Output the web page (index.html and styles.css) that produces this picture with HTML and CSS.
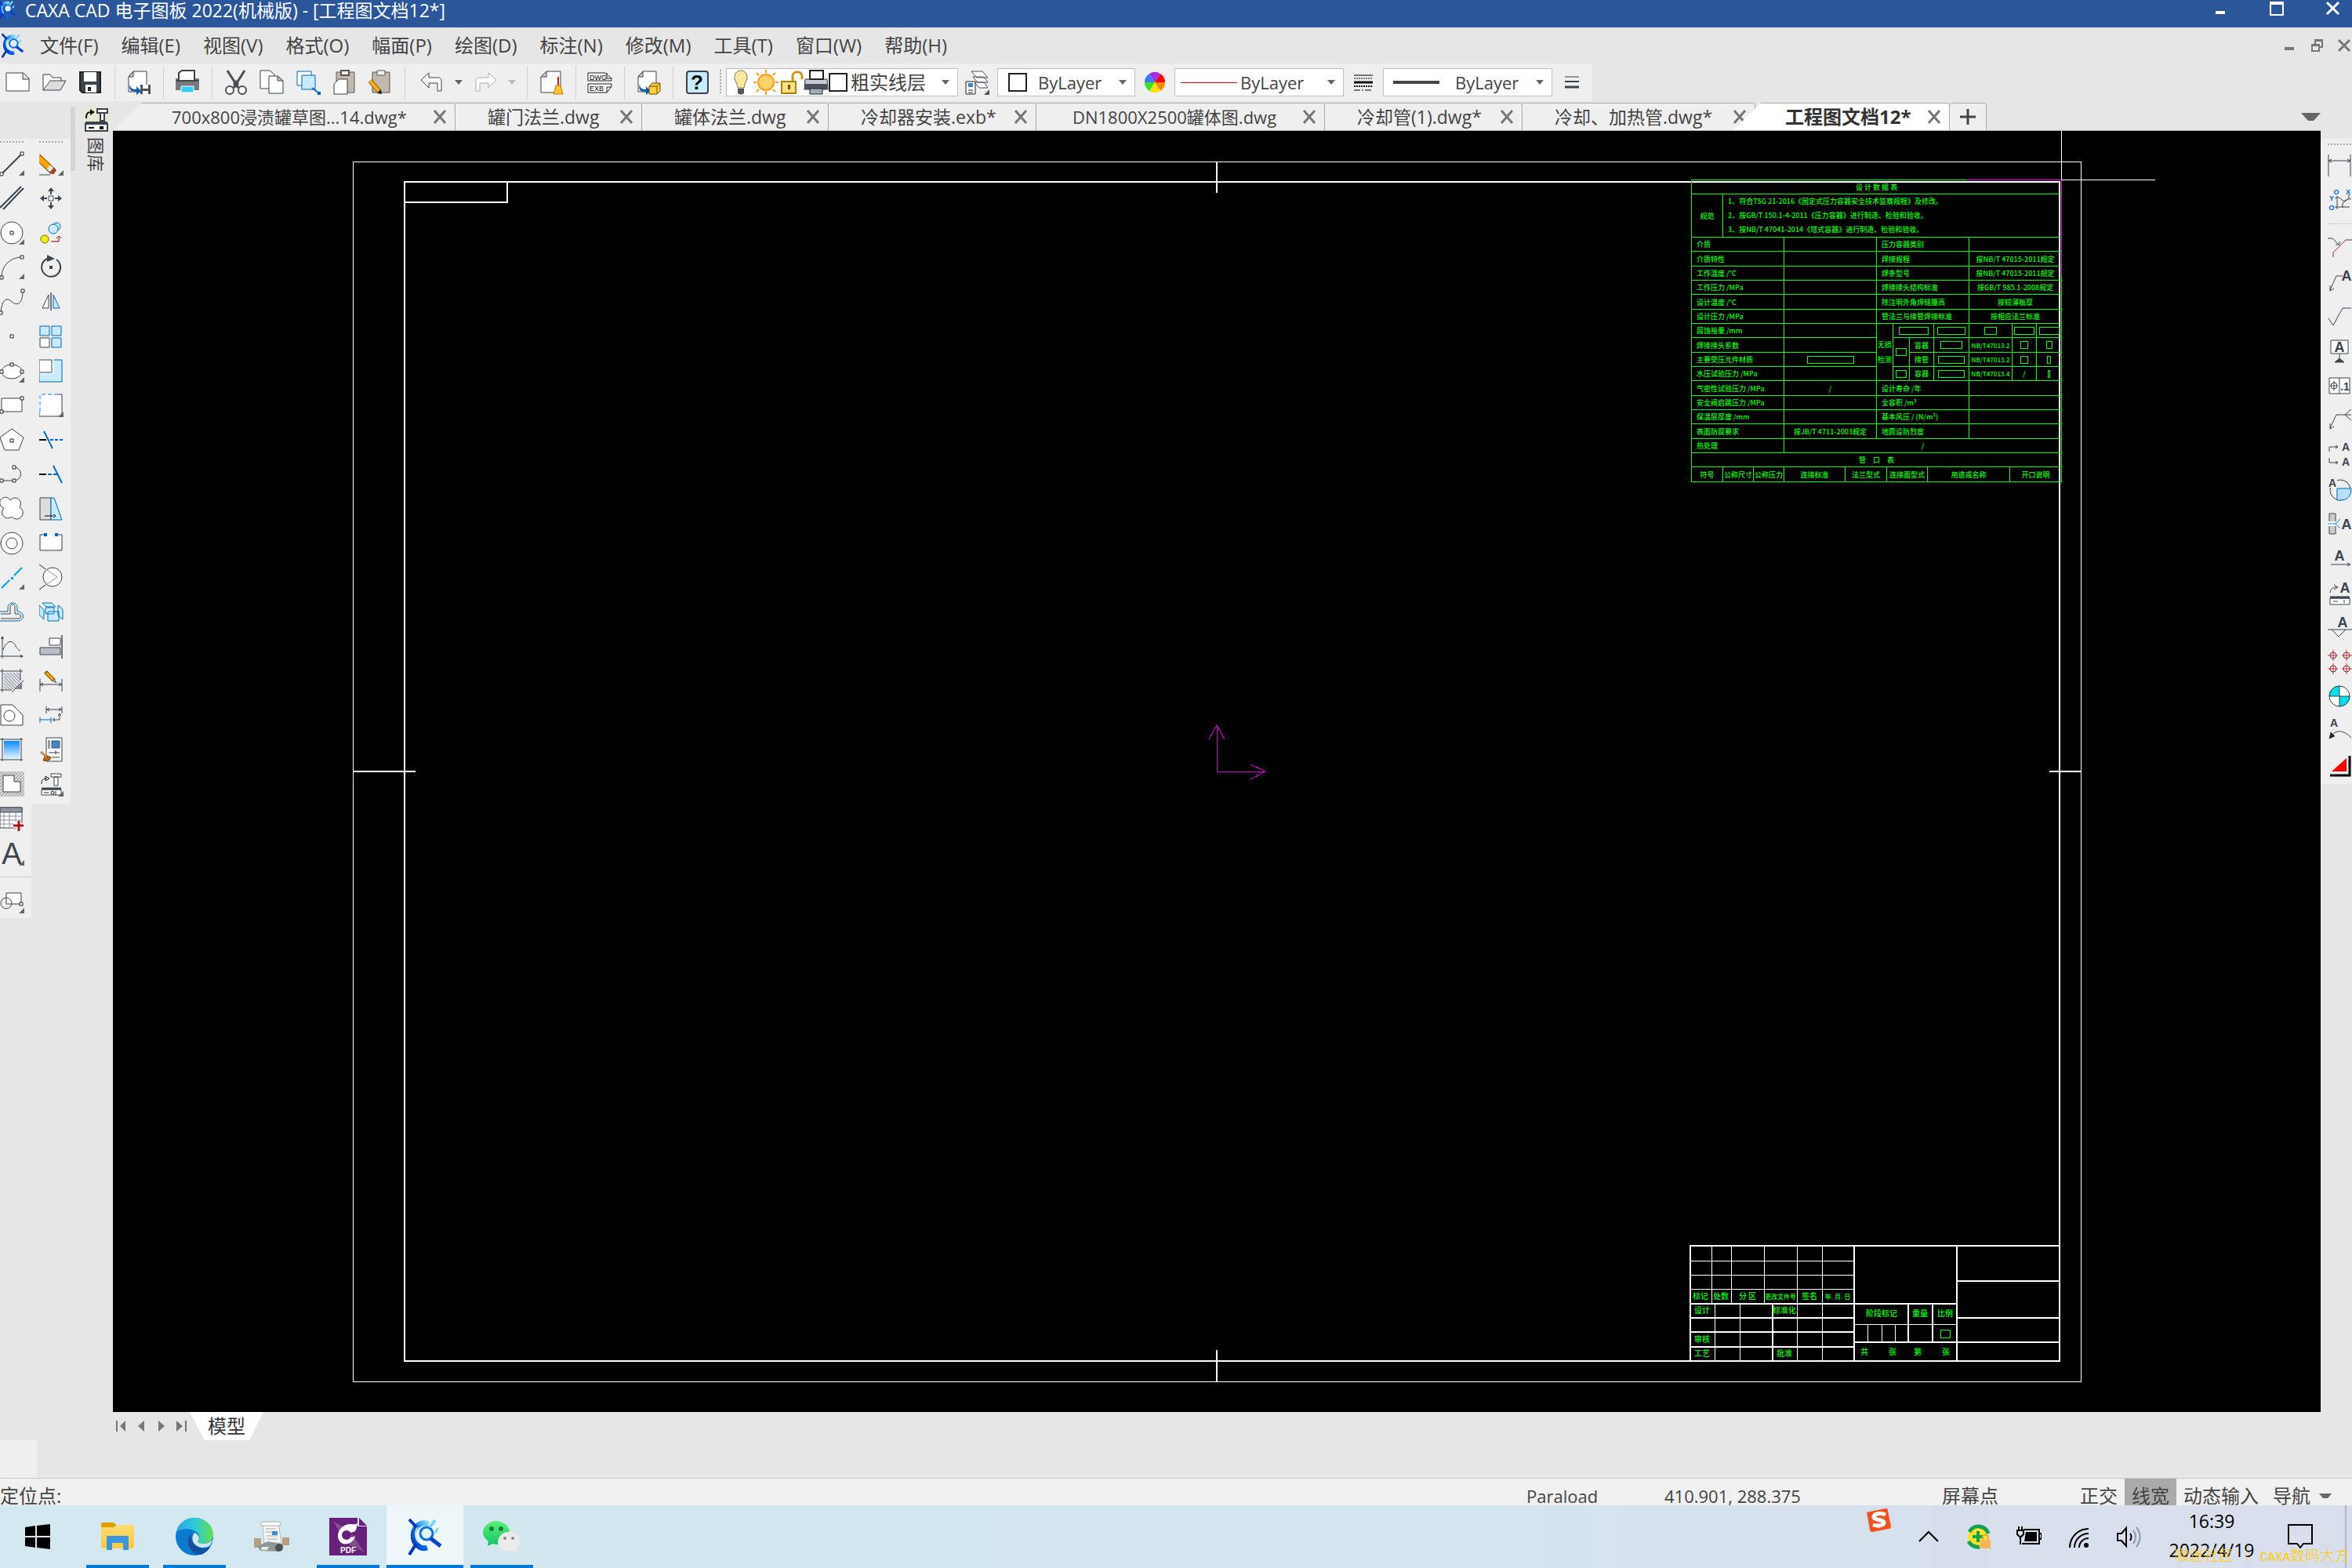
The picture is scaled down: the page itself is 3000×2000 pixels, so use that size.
FILE: index.html
```html
<!DOCTYPE html>
<html lang="zh-CN">
<head>
<meta charset="utf-8">
<title>CAXA CAD 电子图板 2022(机械版)</title>
<link rel="stylesheet" href="styles.css">
</head>
<body>
<svg class="defs" aria-hidden="true">
  <defs>
    <linearGradient id="gBlue" x1="0" y1="0" x2="0" y2="1"><stop offset="0" stop-color="#0a8bff"/><stop offset="1" stop-color="#e6f5ff"/></linearGradient>
    <linearGradient id="gLogo" x1="0" y1="1" x2="1" y2="0"><stop offset="0" stop-color="#0233c4"/><stop offset=".5" stop-color="#0a78f0"/><stop offset="1" stop-color="#8fe0ff"/></linearGradient>
    <linearGradient id="gEdge" x1="0" y1="0" x2="1" y2="0"><stop offset="0" stop-color="#2ba6e8"/><stop offset=".5" stop-color="#2fc8d8"/><stop offset="1" stop-color="#62e04a"/></linearGradient>
    <linearGradient id="gFolder" x1="0" y1="0" x2="0" y2="1"><stop offset="0" stop-color="#ffdc73"/><stop offset="1" stop-color="#ffc83c"/></linearGradient>
    <linearGradient id="gChat" x1="0" y1="0" x2="0" y2="1"><stop offset="0" stop-color="#5ff07a"/><stop offset="1" stop-color="#10c466"/></linearGradient>
    <pattern id="hatch" width="3" height="3" patternUnits="userSpaceOnUse" patternTransform="rotate(-45)"><rect width="3" height="3" fill="#e3e6ea"/><rect width="1" height="3" fill="#8d959e"/></pattern>
    <pattern id="hatch2" width="3" height="3" patternUnits="userSpaceOnUse" patternTransform="rotate(45)"><rect width="3" height="3" fill="#ddd"/><rect width="1" height="3" fill="#999"/></pattern>
  </defs>
  <symbol id="more" viewBox="0 0 32 44"><path d="M31 31v7h-7z" fill="#666"/></symbol>
  <symbol id="x" viewBox="0 0 20 20"><path d="M2 2l14 16M16 2L2 18"/></symbol>
  <symbol id="logo" viewBox="0 0 44 48">
    <path d="M27 8A14 16 0 1 0 25 38" fill="none" stroke="url(#gLogo)" stroke-width="7"/>
    <path d="M2 2l11 12M2 47l9-14" stroke="#0639b8" stroke-width="4"/>
    <circle cx="24" cy="20" r="8" fill="#e4f4ff" stroke="#0a6ef0" stroke-width="3"/>
    <path d="M29 26l13 10" stroke="#0644d0" stroke-width="5"/>
    <path d="M28 12l7-9" stroke="#7fd4ff" stroke-width="4"/>
    <path d="M38 13a12 12 0 0 1-3 6" stroke="#7fd4ff" stroke-width="3" fill="none"/>
    <path d="M13 12a13 14 0 0 0 1 19" fill="none" stroke="#bfeaff" stroke-width="2"/>
  </symbol>
</svg>

<header class="titlebar">
  <svg class="title-logo" viewBox="0 0 44 48"><use href="#logo"/></svg>
  <h1>CAXA CAD 电子图板 2022(机械版) - [工程图文档12*]</h1>
  <div class="winbtns">
    <button aria-label="最小化"><svg viewBox="0 0 20 20"><path d="M4 13h12v4H4z" fill="#fff"/></svg></button>
    <button aria-label="最大化"><svg viewBox="0 0 20 20"><path d="M1 1h18v18H1zM3 5v12h14V5z" fill="#fff" fill-rule="evenodd"/></svg></button>
    <button aria-label="关闭"><svg viewBox="0 0 20 20"><path d="M2 2l15 15M17 2L2 17" stroke="#fff" stroke-width="3"/></svg></button>
  </div>
</header>

<nav class="menubar">
  <svg class="menu-logo" viewBox="0 0 44 48"><use href="#logo"/></svg>
  <button>文件(F)</button><button>编辑(E)</button><button>视图(V)</button><button>格式(O)</button><button>幅面(P)</button><button>绘图(D)</button><button>标注(N)</button><button>修改(M)</button><button>工具(T)</button><button>窗口(W)</button><button>帮助(H)</button>
  <div class="mdibtns">
    <button aria-label="最小化文档"><svg viewBox="0 0 20 20"><path d="M4 12h12v4H4z" fill="#777"/></svg></button>
    <button aria-label="还原文档"><svg viewBox="0 0 20 20"><path d="M7 2h11v11h-4v5H3V8h4zM9 5v3h5v3h2V5zM5 11v5h7v-5z" fill="#777" fill-rule="evenodd"/></svg></button>
    <button aria-label="关闭文档"><svg viewBox="0 0 20 20"><path d="M3 3l14 14M17 3L3 17" stroke="#777" stroke-width="3"/></svg></button>
  </div>
</nav>

<div class="toolrow">
<div class="toolbar">
  <button aria-label="新建"><svg viewBox="0 0 32 32"><path d="M1 4h22l7 7v16H1z" fill="#fff" stroke="#3b444f"/><path d="M22 4v8h8" fill="#ddd" stroke="#3b444f"/></svg></button>
  <button aria-label="打开"><svg viewBox="0 0 32 32"><path d="M2 26V6h9l3 4h11v4" fill="#fff" stroke="#3b444f"/><path d="M2 26l9-12h20l-7 12z" fill="#ddd" stroke="#3b444f"/></svg></button>
  <button aria-label="保存"><svg viewBox="0 0 32 32"><path d="M3 3h26v26H6l-3-3z" fill="#3b444f" stroke="#222" stroke-width="2"/><path d="M8 3h16v12H8z" fill="#fff"/><path d="M10 19h14v10H10z" fill="#fff"/><path d="M13 22h4v5h-4z" fill="#222"/></svg></button>
  <i class="sep"></i>
  <button aria-label="另存为"><svg viewBox="0 0 32 32"><path d="M9 2h17v26H3V9z" fill="#fff" stroke="#3b444f"/><path d="M9 2v7H3z" fill="#ccc" stroke="#3b444f"/><path d="M5 18c0 6 3 7 8 7v-4l6 6-6 5v-4C5 28 3 25 5 18z" fill="#0f5fae"/><path d="M18 19h13v12H18z" fill="#4a535e"/><path d="M21 19h7v5h-7zM21 27h7v4h-7z" fill="#fff"/></svg></button>
  <i class="sep"></i>
  <button aria-label="打印"><svg viewBox="0 0 32 32"><path d="M1 11h30v15H1z" fill="#77797c"/><path d="M5 14V4l4-3h16v13z" fill="#fff" stroke="#3b444f" stroke-width="2"/><path d="M2 14h28" stroke="#444" stroke-width="2"/><path d="M8 21h16v8H8z" fill="#37cdf5" stroke="#fff"/></svg></button>
  <i class="sep"></i>
  <button aria-label="剪切"><svg viewBox="0 0 32 32"><path d="M5 1l14 22M27 1L13 23" stroke="#4b4f55" stroke-width="3" fill="none"/><path d="M12 18l4-5 4 5-4 5z" fill="#4b4f55"/><circle cx="8" cy="26" r="5" fill="#fff" stroke="#4b4f55" stroke-width="2"/><circle cx="24" cy="26" r="5" fill="#fff" stroke="#4b4f55" stroke-width="2"/></svg></button>
  <button aria-label="复制"><svg viewBox="0 0 32 32"><path d="M1 1h12l6 5v18H1z" fill="#fff" stroke="#3b444f"/><path d="M12 8h11l7 6v16H12z" fill="#fff" stroke="#3b444f"/><path d="M23 8v6h7z" fill="#ccc" stroke="#3b444f"/></svg></button>
  <button aria-label="带基点复制"><svg viewBox="0 0 32 32"><path d="M2 2h18v18H2z" fill="#fff" stroke="#0066b8"/><path d="M8 7h17v18H8z" fill="#c9ebff" stroke="#0066b8"/><path d="M21 23l9 7" stroke="#0066b8" stroke-width="2"/><path d="M28 28h4v4h-4z" fill="#0066b8"/></svg></button>
  <button aria-label="粘贴"><svg viewBox="0 0 32 32"><path d="M6 3h23v26H6z" fill="#c2b9ae" stroke="#5b5550"/><path d="M12 1h10v6H12z" fill="#eee" stroke="#5b5550" stroke-width="2"/><path d="M9 12h11v19H3V18z" fill="#fff" stroke="#3b444f"/></svg></button>
  <button aria-label="选择性粘贴"><svg viewBox="0 0 32 32"><path d="M6 3h22v26H6z" fill="#c2b9ae" stroke="#5b5550"/><path d="M12 1h10v6H12z" fill="#eee" stroke="#5b5550"/><path d="M3 14l12 14" stroke="#9a6200" stroke-width="6"/><path d="M3 14l11 13" stroke="#ffb020" stroke-width="4"/><path d="M12 30l6 1-1-6z" fill="#222"/></svg></button>
  <i class="sep"></i>
  <button class="undo" aria-label="撤销"><svg viewBox="0 0 32 32"><path d="M2 13L12 4v6h11c4 0 5 2 5 5v12h-5V17H12v6z" fill="#fff" stroke="#3b444f"/></svg></button>
  <button class="drop" aria-label="撤销列表"></button>
  <button aria-label="重做"><svg viewBox="0 0 32 32"><path d="M30 13L20 4v6H9c-4 0-5 2-5 5v12h5V17h11v6z" fill="#fff" stroke="#aaa"/></svg></button>
  <button class="drop dim" aria-label="重做列表"></button>
  <i class="sep"></i>
  <button aria-label="清理"><svg viewBox="0 0 32 32"><path d="M10 2h18v27H3V9z" fill="#fff" stroke="#3b444f"/><path d="M10 2v7H3z" fill="#ccc" stroke="#3b444f"/><path d="M25 9v12" stroke="#b3261e" stroke-width="2"/><path d="M22 20h6l3 11H19z" fill="#ffc52e" stroke="#b87a00"/></svg></button>
  <i class="sep"></i>
  <button aria-label="DWG转换"><svg viewBox="0 0 32 32"><path d="M1 4h22l8 7v3H1zM1 18h30v3l-6 8H1z" fill="#fff" stroke="#222"/><path d="M25 4v7h6M25 29v-7h6" fill="none" stroke="#222"/><text class="ic-code" x="3" y="13">DWG</text><text class="ic-code" x="3" y="27">EXB</text></svg></button>
  <i class="sep"></i>
  <button aria-label="导出"><svg viewBox="0 0 32 32"><path d="M9 2h17v26H3V9z" fill="#fff" stroke="#3b444f"/><path d="M9 2v7H3z" fill="#ccc" stroke="#3b444f"/><path d="M5 18c0 6 3 7 8 7v-4l6 6-6 5v-4C5 28 3 25 5 18z" fill="#0f5fae"/><path d="M17 21l4-4h10v10l-4 4H17z" fill="#ffcf3a" stroke="#6b5100"/><path d="M17 21h10v10M27 21l4-4" fill="none" stroke="#6b5100"/></svg></button>
  <i class="sep"></i>
  <button aria-label="帮助"><svg viewBox="0 0 32 32"><rect x="3" y="2" width="27" height="28" rx="3" fill="#c9ebff" stroke="#3b444f" stroke-width="2"/><text class="ic-help" x="16" y="25">?</text></svg></button>
  <i class="grip-v"></i>
  <div class="combo layer">
    <svg viewBox="0 0 32 32"><path d="M16 1c6 0 8 5 8 9 0 5-4 7-4 13h-8c0-6-4-8-4-13 0-4 2-9 8-9z" fill="#ffe9a0" stroke="#7b7358"/><path d="M12 24h8v6l-4 2-4-2z" fill="#555"/></svg>
    <svg viewBox="0 0 32 32"><circle cx="16" cy="16" r="10" fill="#ffd36b" stroke="#ff9d1c" stroke-width="2"/><path d="M16 0v4M16 28v4M0 16h4M28 16h4M4 4l3 3M25 25l3 3M28 4l-3 3M7 25l-3 3" stroke="#ff9d1c" stroke-width="2"/></svg>
    <svg viewBox="0 0 32 32"><path d="M18 15V8c0-7 12-7 12 0v4" fill="none" stroke="#c79310" stroke-width="3"/><path d="M4 15h18v15H4z" fill="#ffe08a" stroke="#b08000" stroke-width="2"/><path d="M12 19h3v6h-3z" fill="#7a5200"/></svg>
    <svg viewBox="0 0 32 32"><path d="M2 12h28l1 13H1z" fill="#c6cbd2" stroke="#333"/><path d="M8 12V1h17v11z" fill="#fff" stroke="#222" stroke-width="2"/><path d="M2 18h28v7H2z" fill="#4a515b"/><path d="M8 24h16v7H8z" fill="#9bb0bf" stroke="#222"/></svg>
    <span class="swatch"></span>
    <select aria-label="图层"><option>粗实线层</option></select>
  </div>
  <button class="mid" aria-label="图层设置"><svg viewBox="0 0 32 32"><path d="M8 2h14l7 8H15zM10 9h14l5 7H16zM12 16h12l5 7H18z" fill="#fff" stroke="#46505a"/><path d="M1 15h12v16H1z" fill="#fff" stroke="#222"/><path d="M4 17h6v5H4z" fill="#3b84c8"/><path d="M4 26h6M4 29h6" stroke="#222"/><path d="M31 25v7h-7z" fill="#555"/></svg></button>
  <div class="combo color"><span class="swatch"></span><select aria-label="颜色"><option>ByLayer</option></select></div>
  <button class="mid" aria-label="颜色设置"><svg viewBox="-16 -16 32 32"><path d="M0 0L-7-11A13 13 0 0 1 7-11z" fill="#a42be8"/><path d="M0 0L7-11A13 13 0 0 1 13 0z" fill="#f00"/><path d="M0 0H13A13 13 0 0 1 7 11z" fill="#ff8a00"/><path d="M0 0L7 11A13 13 0 0 1-7 11z" fill="#ffe000"/><path d="M0 0L-7 11A13 13 0 0 1-13 0z" fill="#3fe02b"/><path d="M0 0H-13A13 13 0 0 1-7-11z" fill="#3b7bff"/></svg></button>
  <div class="combo line"><span class="sample red"></span><select aria-label="线型"><option>ByLayer</option></select></div>
  <button class="mid" aria-label="线型设置"><svg viewBox="0 0 32 32"><path d="M4 7h24" stroke="#777" stroke-width="2"/><path d="M4 11h24" stroke="#777" stroke-width="2" stroke-dasharray="2 1"/><path d="M4 16h24" stroke="#111" stroke-width="3"/><path d="M4 21h24" stroke="#111" stroke-width="2" stroke-dasharray="2 1"/><path d="M4 26h24" stroke="#777" stroke-width="2" stroke-dasharray="8 2 2 2"/></svg></button>
  <div class="combo line"><span class="sample thick"></span><select aria-label="线宽"><option>ByLayer</option></select></div>
  <button class="mid" aria-label="线宽设置"><svg viewBox="0 0 32 32"><path d="M7 9h18" stroke="#3b444f"/><path d="M7 15h18" stroke="#3b444f" stroke-width="2"/><path d="M7 22h18" stroke="#3b444f" stroke-width="3"/></svg></button>
</div>
</div>

<main class="work">
  <aside class="dock-left">
    <div class="palette p1">
      <i class="grip-h"></i>
      <button aria-label="直线"><svg class="k" viewBox="0 0 32 44"><path d="M2 36L28 10" stroke-width="2"/><path class="h" d="M0 34h4v4H0zM26 8h4v4h-4z"/><use href="#more"/></svg></button>
      <button aria-label="平行线"><svg class="k" viewBox="0 0 32 44"><path d="M0 35L27 8M4 37L30 10" stroke-width="2"/></svg></button>
      <button aria-label="圆"><svg class="k" viewBox="0 0 32 44"><circle cx="15" cy="23" r="14" fill="#fff"/><path class="h" d="M13 21h4v4h-4z"/><use href="#more"/></svg></button>
      <button aria-label="圆弧"><svg class="k" viewBox="0 0 32 44"><path d="M2 36C2 20 14 10 28 10"/><path class="h" d="M0 34h4v4H0zM26 8h4v4h-4z"/><use href="#more"/></svg></button>
      <button aria-label="样条"><svg class="k" viewBox="0 0 32 44"><path d="M1 37C2 20 9 17 14 22S29 30 29 9"/><path class="h" d="M-1 35h4v4h-4zM27 7h4v4h-4z"/></svg></button>
      <button aria-label="点"><svg class="k" viewBox="0 0 32 44"><path class="h" d="M13 21h4v4h-4z"/></svg></button>
      <button aria-label="椭圆"><svg class="k" viewBox="0 0 32 44"><ellipse cx="15" cy="24" rx="13" ry="9" fill="#fff"/><path class="h" d="M13 13h4v4h-4zM0 22h4v4H0zM26 22h4v4h-4z"/><use href="#more"/></svg></button>
      <button aria-label="矩形"><svg class="k" viewBox="0 0 32 44"><path d="M2 14h26v17H2z" fill="#fff"/><path class="h" d="M0 29h4v4H0zM26 12h4v4h-4z"/></svg></button>
      <button aria-label="正多边形"><svg class="k" viewBox="0 0 32 44"><path d="M15 9l15 11-6 16H6L0 20z" fill="#fff"/><path class="h" d="M13 22h4v4h-4z"/></svg></button>
      <button aria-label="多段线"><svg class="k" viewBox="0 0 32 44"><path d="M2 31h16a8 8 0 0 0 0-17"/><path class="h" d="M0 29h4v4H0zM16 29h4v4h-4zM16 12h4v4h-4z"/></svg></button>
      <button aria-label="云线"><svg class="k" viewBox="0 0 32 44"><path d="M13 12a7 7 0 1 1 12 9 8 8 0 1 1-10 12A7 7 0 1 1 5 22a7 7 0 1 1 8-10z" fill="#fff"/></svg></button>
      <button aria-label="圆环"><svg class="k" viewBox="0 0 32 44"><circle cx="15" cy="23" r="14" fill="#fff"/><circle cx="15" cy="23" r="7"/></svg></button>
      <button aria-label="中心线"><svg class="k" viewBox="0 0 32 44"><path d="M2 36l10-10M18 20L28 10" stroke="#00a2e8" stroke-width="2"/><path d="M14 22h3v3h-3z" fill="#00a2e8" stroke="none"/><use href="#more"/></svg></button>
      <button aria-label="等距线"><svg class="k" viewBox="0 0 32 44"><path d="M0 22h10v-5c0-8 12-8 12 0v5c10 0 10 12 0 12H0" stroke="#0066b8"/><path d="M1 25h12V16c0-4 6-4 6 0v9h4c5 0 5 6 0 6H1"/></svg></button>
      <button aria-label="公式曲线"><svg class="k" viewBox="0 0 32 44"><path d="M3 38V11M0 35h28M4 27C8 15 16 13 20 22c2 4 4 5 6 6"/><path d="M3 9l2 4H1zM30 35l-4 2v-4z" fill="#3b444f" stroke="none"/></svg></button>
      <button aria-label="剖面线"><svg class="k" viewBox="0 0 32 44"><path d="M5 12h21v21H5z" fill="url(#hatch)" stroke="none"/><path d="M0 10h29M0 34h15M3 7v30M26 7v15M15 37l15-15"/><path d="M28 25v8h-8z" fill="#7d848e" stroke="none"/></svg></button>
      <button aria-label="填充"><svg class="k" viewBox="0 0 32 44"><path d="M1 9h15l13 13v13H1z" fill="#fff"/><circle cx="12" cy="23" r="7"/></svg></button>
      <button aria-label="渐变填充"><svg class="k" viewBox="0 0 32 44"><path d="M5 11h20v23H5z" fill="url(#gBlue)" stroke="none"/><path d="M0 9h29M0 35h29M3 7v30M27 7v30"/></svg></button>
      <button aria-label="局部放大"><svg class="k" viewBox="0 0 32 44"><path d="M0 6h31v32H0z" fill="url(#hatch2)" stroke="none"/><path d="M4 11h14v8h8v13H4z" fill="#fff"/></svg></button>
      <button aria-label="表格"><svg class="k" viewBox="0 0 32 44"><path d="M0 8h28v26H0z" fill="#fff"/><path d="M0 8h28v6H0z" fill="#9097a1"/><path d="M0 19h28M0 24h28M0 29h18M5 14v20M12 14v20M20 14v12" stroke="#8a9099"/><path d="M17 31h13M24 25v13" stroke="#fff" stroke-width="6"/><path d="M17 31h13M24 25v13" stroke="#b01010" stroke-width="3"/></svg></button>
      <button aria-label="文字"><svg class="k" viewBox="0 0 32 44"><text class="ic-a big" x="15" y="36">A</text><use href="#more"/></svg></button>
      <i class="rule"></i>
      <button aria-label="基本图形"><svg class="k" viewBox="0 0 32 44"><path d="M8 12h19v14H8z" fill="#fff"/><circle cx="8" cy="25" r="7"/><path class="h" d="M25 24h4v4h-4z"/><use href="#more"/></svg></button>
    </div>
    <div class="palette p2">
      <i class="grip-h"></i>
      <button aria-label="删除"><svg class="k" viewBox="0 0 32 44"><path d="M-2 14L18 33" stroke="#7a4b00" stroke-width="9"/><path d="M-2 14L13 28" stroke="#ffa800" stroke-width="7"/><path d="M12 27l4 4" stroke="#e4e0dc" stroke-width="7"/><path d="M16 31l4 3" stroke="#a0452b" stroke-width="7"/><path d="M0 37h14"/><use href="#more"/></svg></button>
      <button aria-label="平移"><svg class="k" viewBox="0 0 32 44"><path d="M12 20h6v6h-6z" fill="#fff"/><path d="M15 9l4 5h-3v4h-2v-4h-3zM15 37l4-5h-3v-4h-2v4h-3zM1 23l5-4v3h4v2H6v3zM29 23l-5-4v3h-4v2h4v3z" fill="#3b444f" stroke="none"/></svg></button>
      <button aria-label="平移复制"><svg class="k" viewBox="0 0 32 44"><circle cx="22" cy="15" r="5" fill="#c9ebff" stroke="#0066b8"/><circle cx="18" cy="18" r="6" fill="#c9ebff" stroke="#0066b8"/><circle cx="7" cy="31" r="5" fill="#fff200" stroke="#6b6600"/><path d="M15 34h10v-5M22 30l3-3 3 3" stroke="#8a0000"/></svg></button>
      <button aria-label="旋转"><svg class="k" viewBox="0 0 32 44"><path d="M22 13a12 12 0 1 1-12-1" stroke-width="2"/><path d="M10 7l10 5-10 4z" fill="#3b444f" stroke="none"/><path d="M13 21h4v4h-4z" fill="#3b444f" stroke="none"/></svg></button>
      <button aria-label="镜像"><svg class="k" viewBox="0 0 32 44"><path d="M12 14v17H4z" fill="#fff"/><path d="M18 14v17h8z" fill="#c9ebff" stroke="#0066b8"/><path d="M15 11v23" stroke="#777" stroke-width="2"/></svg></button>
      <button aria-label="阵列"><svg class="k" viewBox="0 0 32 44"><path d="M1 10h12v12H1zM16 10h12v12H16zM16 25h12v12H16z" fill="#c9ebff" stroke="#0066b8"/><path d="M1 25h12v12H1z" fill="#fff"/></svg></button>
      <button aria-label="缩放"><svg class="k" viewBox="0 0 32 44"><path d="M0 9h29v28H0z" fill="#c9ebff" stroke="#0066b8"/><path d="M0 8h18v18H0z" fill="#fff" stroke="#fff"/><path d="M0 9h16v16H0z" fill="#fff"/></svg></button>
      <button aria-label="拉伸"><svg class="k" viewBox="0 0 32 44"><path d="M0 9h29v28H0z" fill="#fff" stroke="none"/><path d="M1 31V9h22" stroke="#0a84ff" stroke-dasharray="5 3"/><path d="M23 9h6v28H0v-6"/><use href="#more"/></svg></button>
      <button aria-label="裁剪"><svg class="k" viewBox="0 0 32 44"><path d="M0 23h9" stroke="#000" stroke-width="2"/><path d="M14 23h16" stroke="#0066cc" stroke-width="2" stroke-dasharray="4 2"/><path d="M6 12l11 22" stroke="#0066cc" stroke-width="2"/></svg></button>
      <button aria-label="延伸"><svg class="k" viewBox="0 0 32 44"><path d="M0 23h9" stroke="#000" stroke-width="2"/><path d="M11 23h12" stroke="#0066cc" stroke-width="2" stroke-dasharray="5 2"/><path d="M18 12l11 22" stroke="#0066cc" stroke-width="2"/></svg></button>
      <button aria-label="过渡"><svg class="k" viewBox="0 0 32 44"><path d="M1 9h14v28H1z" fill="#ddd"/><path d="M15 9h4l10 28H15z" fill="#c9ebff" stroke="#0066b8"/><path d="M7 32h11M18 30l3 2-3 2" stroke="#000"/></svg></button>
      <button aria-label="打断"><svg class="k" viewBox="0 0 32 44"><path d="M7 12H1v20h28V12h-6" fill="#fff"/><path d="M6 10h4v4H6zM20 10h4v4h-4z" fill="#0066b8" stroke="none"/></svg></button>
      <button aria-label="相切"><svg class="k" viewBox="0 0 32 44"><circle cx="17" cy="22" r="12" fill="#fff"/><path d="M0 6l23 16L0 38" stroke="#999"/><path d="M0 6l8 6M0 38l8-6"/></svg></button>
      <button aria-label="分解"><svg class="k" viewBox="0 0 32 44"><path d="M4 11h12l5 5H9zM0 14l6 6v12l-6-6zM24 14l6 5v13l-6-5zM8 17h11v8H8zM11 22h14v12H11z" fill="#c9ebff" stroke="#0070c0"/></svg></button>
      <button aria-label="对齐"><svg class="k" viewBox="0 0 32 44"><path d="M13 12h14v9H13z" fill="#fff"/><path d="M1 24h26v9H1z" fill="#b9bec7"/><path d="M29 8v30" stroke="#000"/></svg></button>
      <button aria-label="标注编辑"><svg class="k" viewBox="0 0 32 44"><path d="M1 20v16M29 20v16M1 27h28M5 25l-4 2 4 2M25 25l4 2-4 2"/><path d="M8 11l11 11" stroke="#7a4b00" stroke-width="5"/><path d="M9 12l10 10" stroke="#ffa800" stroke-width="3"/><path d="M19 20l3 5-5-3z" fill="#ddd" stroke="#555"/></svg></button>
      <button aria-label="标注替换"><svg class="k" viewBox="0 0 32 44"><path d="M9 11v9M29 11v9M9 15h20M13 13l-3 2 3 2M25 13l3 2-3 2M26 21v7h-8M24 23l2-3 2 3M20 26l-3 2 3 2"/><path d="M1 25v7M15 25v7M1 28h14" stroke="#0066b8"/></svg></button>
      <button aria-label="特性匹配"><svg class="k" viewBox="0 0 32 44"><path d="M9 7h20v30H9z" fill="#fff"/><path d="M11 10h3v11h-3z" fill="#999" stroke="none"/><path d="M16 11h10v9H16z" fill="#4a83ba" stroke="#1d5a93"/><path d="M12 26h14M16 32h10M21 23v5"/><path d="M8 29l7 3c-1 4-4 5-10 4z" fill="#b56a1c" stroke="#6f3b05"/><path d="M2 25l7 6" stroke="#c98f54" stroke-width="3"/></svg></button>
      <button aria-label="图库转换"><svg class="k" viewBox="0 0 32 44"><path d="M15 9h13v4H15zM19 13h5v11h-5zM3 29h25v7H3z" fill="#fff"/><path d="M3 28h25" stroke-width="3"/><path d="M3 22c0-6 2-7 7-7M8 12l5 3-5 3zM6 33h6M21 31v5" stroke="#222"/><circle cx="17" cy="33" r="2" stroke="#222"/><use href="#more"/></svg></button>
    </div>
    <i class="splitter"></i>
    <button class="library"><svg viewBox="0 0 32 32"><path d="M0 0h32v32H0z" fill="#e8e9d2"/><path d="M17 2h13v5H17zM21 7h5v10h-5zM2 21h28v9H2z" fill="#fff" stroke="#3b444f" stroke-width="2"/><path d="M2 20h28" stroke="#3b444f" stroke-width="4"/><path d="M3 14c0-7 2-8 6-8" fill="none" stroke="#111" stroke-width="2"/><path d="M8 2l6 4-6 4zM6 25h7v2H6zM20 24h5v4h-5z" fill="#111"/></svg><span>图库</span></button>
  </aside>

  <section class="center">
    <div class="doctabs">
      <div class="tab first"><a href="#d1">700x800浸渍罐草图...14.dwg*</a><button aria-label="关闭"><svg><use href="#x"/></svg></button></div>
      <div class="tab"><a href="#d2">罐门法兰.dwg</a><button aria-label="关闭"><svg><use href="#x"/></svg></button></div>
      <div class="tab"><a href="#d3">罐体法兰.dwg</a><button aria-label="关闭"><svg><use href="#x"/></svg></button></div>
      <div class="tab"><a href="#d4">冷却器安装.exb*</a><button aria-label="关闭"><svg><use href="#x"/></svg></button></div>
      <div class="tab"><a href="#d5">DN1800X2500罐体图.dwg</a><button aria-label="关闭"><svg><use href="#x"/></svg></button></div>
      <div class="tab"><a href="#d6">冷却管(1).dwg*</a><button aria-label="关闭"><svg><use href="#x"/></svg></button></div>
      <div class="tab"><a href="#d7">冷却、加热管.dwg*</a><button aria-label="关闭"><svg><use href="#x"/></svg></button></div>
      <div class="tab active"><a href="#d8">工程图文档12*</a><button aria-label="关闭"><svg><use href="#x"/></svg></button></div>
      <button class="newtab" aria-label="新建文档"><svg viewBox="0 0 20 20"><path d="M10 0v20M0 10h20" stroke="#444" stroke-width="3"/></svg></button>
      <button class="tablist" aria-label="文档列表"></button>
    </div>

    <div class="canvas">
      <svg class="sheet" viewBox="144 167 2816 1634" preserveAspectRatio="xMinYMin meet">
        <g class="thin">
          <path d="M450 206H2654V1762H450z"/>
          <path d="M2183 1589V1663M2208 1589V1663M2250 1589V1663M2292 1589V1736M2324 1589V1736M2187 1663V1736M2219 1663V1736M2156 1608H2364M2156 1626H2364M2156 1644H2364M2364 1689H2496M2382 1689V1712M2400 1689V1712M2417 1689V1712"/>
        </g>
        <g class="bold">
          <path d="M516 232H2627V1736H516zM516 258H647V232M1552 206V246M1552 1722V1762M450 984H530M2614 984H2654"/>
          <path d="M2156 1736V1589H2627M2365 1589V1736M2496 1589V1736M2261 1663V1736M2156 1663H2496M2156 1681H2364M2156 1699H2364M2156 1718H2364M2434 1663V1712M2465 1663V1712M2364 1712H2627M2496 1634H2627M2496 1681H2627"/>
        </g>
        <g class="axis"><path d="M1552 925V984H1614M1542 943L1552 925L1562 943M1595 975L1614 984L1595 994"/></g>
        <g class="note">
          <text x="2169" y="1657">标记</text><text x="2195" y="1657">处数</text><text x="2229" y="1657">分 区</text><text class="sm" x="2271" y="1657">更改文件号</text><text x="2308" y="1657">签名</text><text class="sm" x="2344" y="1657">年. 月. 日</text>
          <text x="2171" y="1675">设计</text><text x="2276" y="1675">标准化</text><text x="2171" y="1712">审核</text><text x="2171" y="1730">工艺</text><text x="2276" y="1730">批准</text>
          <text x="2400" y="1679">阶段标记</text><text x="2449" y="1679">重量</text><text x="2481" y="1679">比例</text>
          <text x="2378" y="1728">共</text><text x="2414" y="1728">张</text><text x="2446" y="1728">第</text><text x="2482" y="1728">张</text>
          <path d="M2475 1696H2487V1706H2475z"/>
        </g>
        <foreignObject x="2157" y="229" width="474" height="387">
          <table class="spec">
            <colgroup><col class="w40"><col class="w39"><col class="w39"><col class="w78"><col class="w40"><col class="w13"><col class="w8"><col class="w21"><col class="w23"><col class="w8"><col class="w45"><col class="w52"><col class="w3"><col class="w31"><col class="w32"></colgroup>
            <tr><th colspan="15">设 计 数 据 表</th></tr>
            <tr class="rules"><td>规范</td><td class="l" colspan="14"><p>1、符合TSG 21-2016《固定式压力容器安全技术监察规程》及修改。</p><p>2、按GB/T 150.1-4-2011《压力容器》进行制造、检验和验收。</p><p>3、按NB/T 47041-2014《塔式容器》进行制造、检验和验收。</p></td></tr>
            <tr><td class="l" colspan="3">介质</td><td colspan="2"></td><td class="l" colspan="6">压力容器类别</td><td colspan="4"></td></tr>
            <tr><td class="l" colspan="3">介质特性</td><td colspan="2"></td><td class="l" colspan="6">焊接规程</td><td colspan="4">按NB/T 47015-2011规定</td></tr>
            <tr><td class="l" colspan="3">工作温度 /°C</td><td colspan="2"></td><td class="l" colspan="6">焊条型号</td><td colspan="4">按NB/T 47015-2011规定</td></tr>
            <tr><td class="l" colspan="3">工作压力 /MPa</td><td colspan="2"></td><td class="l" colspan="6">焊接接头结构标准</td><td colspan="4">按GB/T 985.1-2008规定</td></tr>
            <tr><td class="l" colspan="3">设计温度 /°C</td><td colspan="2"></td><td class="l" colspan="6">除注明外角焊缝腰高</td><td colspan="4">按较薄板厚</td></tr>
            <tr><td class="l" colspan="3">设计压力 /MPa</td><td colspan="2"></td><td class="l" colspan="6">管法兰与接管焊接标准</td><td colspan="4">按相应法兰标准</td></tr>
            <tr><td class="l" colspan="3">腐蚀裕量 /mm</td><td colspan="2"></td><td colspan="2" rowspan="4">无损<br>检测</td><td colspan="3"><i class="box b38"></i></td><td><i class="box b36"></i></td><td colspan="2"><i class="box b16"></i></td><td><i class="box b26"></i></td><td><i class="box b26"></i></td></tr>
            <tr><td class="l" colspan="3">焊接接头系数</td><td colspan="2"></td><td rowspan="2"><i class="box b14"></i></td><td colspan="2">容器</td><td><i class="box b28"></i></td><td class="n" colspan="2">NB/T47013.2</td><td><i class="box b10"></i></td><td><i class="box b8"></i></td></tr>
            <tr><td class="l" colspan="3">主要受压元件材质</td><td colspan="2"><i class="box b60"></i></td><td colspan="2">接管</td><td><i class="box b34"></i></td><td class="n" colspan="2">NB/T47013.2</td><td><i class="box b10"></i></td><td><i class="box b5"></i></td></tr>
            <tr><td class="l" colspan="3">水压试验压力 /MPa</td><td colspan="2"></td><td><i class="box b14"></i></td><td colspan="2">容器</td><td><i class="box b34"></i></td><td class="n" colspan="2">NB/T47013.4</td><td>/</td><td><i class="box b3"></i></td></tr>
            <tr><td class="l" colspan="3">气密性试验压力 /MPa</td><td colspan="2">/</td><td class="l" colspan="6">设计寿命 /年</td><td colspan="4"></td></tr>
            <tr><td class="l" colspan="3">安全阀启跳压力 /MPa</td><td colspan="2"></td><td class="l" colspan="6">全容积 /m³</td><td colspan="4"></td></tr>
            <tr><td class="l" colspan="3">保温层厚度 /mm</td><td colspan="2"></td><td class="l" colspan="6">基本风压 / (N/m²)</td><td colspan="4"></td></tr>
            <tr><td class="l" colspan="3">表面防腐要求</td><td colspan="2">按JB/T 4711-2003规定</td><td class="l" colspan="6">地震设防烈度</td><td colspan="4"></td></tr>
            <tr><td class="l" colspan="3">热处理</td><td colspan="12">/</td></tr>
            <tr><th colspan="15">管　口　表</th></tr>
            <tr><td>符号</td><td>公称尺寸</td><td>公称压力</td><td>连接标准</td><td colspan="2">法兰型式</td><td colspan="3">连接面型式</td><td colspan="3">用途或名称</td><td colspan="3">开口说明</td></tr>
          </table>
        </foreignObject>
        <path class="mag" d="M2509 229H2629V349"/>
        <path class="thin" d="M2629 167V229M2629 229H2749"/>
      </svg>
    </div>

    <div class="sheettabs">
      <button aria-label="第一页"><svg viewBox="0 0 16 16"><path d="M3 1v14" stroke="#777" stroke-width="2"/><path d="M14 1v14L7 8z" fill="#777"/></svg></button>
      <button aria-label="上一页"><svg viewBox="0 0 16 16"><path d="M12 1v14L4 8z" fill="#777"/></svg></button>
      <button aria-label="下一页"><svg viewBox="0 0 16 16"><path d="M4 1v14l8-7z" fill="#777"/></svg></button>
      <button aria-label="最后一页"><svg viewBox="0 0 16 16"><path d="M13 1v14" stroke="#777" stroke-width="2"/><path d="M1 1v14l8-7z" fill="#777"/></svg></button>
      <a class="model" href="#model">模型</a>
    </div>
  </section>

  <aside class="dock-right">
    <div class="palette p3">
      <i class="grip-h"></i>
      <button aria-label="尺寸标注"><svg class="k" viewBox="0 0 32 44"><path d="M1 8v28M29 8v28M1 16h28M5 14l-4 2 4 2M25 14l4 2-4 2"/></svg></button>
      <button aria-label="坐标标注"><svg class="k" viewBox="0 0 32 44"><path d="M12 17v17M9 31h19M9 20c6-5 9 5 13 3s4-3 8-2M19 32v-6l8-6v-5"/><g class="ic-t"><text x="11" y="15">O</text><text x="26" y="15">X</text><text x="5" y="23">Y</text><text x="5" y="35">O</text></g></svg></button>
      <i class="rule"></i>
      <button aria-label="倒角标注"><svg class="k" viewBox="0 0 32 44"><path d="M0 10h6l8 8M10 18h5v-4M7 34v-6"/><path d="M7 28l16-16" stroke="#e22"/><path d="M23 12h8"/></svg></button>
      <button aria-label="引出说明"><svg class="k" viewBox="0 0 32 44"><path d="M3 32l8-18h8M3 26v7l5-3"/><text class="ic-a" x="24" y="20">A</text></svg></button>
      <button aria-label="粗糙度"><svg class="k" viewBox="0 0 32 44"><path d="M1 24l6 9 12-22h11"/></svg></button>
      <button aria-label="基准代号"><svg class="k" viewBox="0 0 32 44"><path d="M4 8h22v17H4z" fill="#fff"/><path d="M15 25v8"/><path d="M15 31l6 5H9z" fill="#3b444f"/><text class="ic-a" x="15" y="23">A</text></svg></button>
      <button aria-label="形位公差"><svg class="k" viewBox="0 0 32 44"><path d="M2 12h26v20H2zM15 12v20" fill="#fff"/><circle cx="8" cy="22" r="4"/><path d="M3 22h10M8 16v12"/><text class="ic-n" x="22" y="28">.1</text></svg></button>
      <button aria-label="焊接符号"><svg class="k" viewBox="0 0 32 44"><path d="M3 32l8-17h19M30 8l-8 7 8 7M3 26v7l5-3"/></svg></button>
      <button aria-label="剖切符号"><svg class="k" viewBox="0 0 32 44"><path d="M2 18v-6h11M2 26v6h11M10 10l3 2-3 2M10 30l3 2-3 2"/><text class="ic-a sm" x="23" y="17">A</text><text class="ic-a sm" x="23" y="36">A</text></svg></button>
      <button aria-label="局部放大"><svg class="k" viewBox="0 0 32 44"><circle cx="16" cy="23" r="13"/><path d="M12 21h18c0 10-5 15-13 15h-5z" fill="#b4e0fa" stroke="#0066b8"/><path d="M0 8h12v12H0z" fill="#efefef" stroke="none"/><text class="ic-a sm" x="6" y="19">A</text></svg></button>
      <button aria-label="孔标注"><svg class="k" viewBox="0 0 32 44"><path d="M2 9h8v26H2z" fill="#ccc"/><path d="M0 22h12" stroke="#fff" stroke-width="6"/><path d="M0 22h10l6-6M10 22l6 6" stroke="#0a84ff"/><text class="ic-a" x="24" y="29">A</text></svg></button>
      <button aria-label="向视符号"><svg class="k" viewBox="0 0 32 44"><text class="ic-a" x="15" y="25">A</text><path d="M4 30h24M25 28l4 2-4 2"/></svg></button>
      <button aria-label="标注转换"><svg class="k" viewBox="0 0 32 44"><path d="M3 29h25v8H3z" fill="#fff"/><path d="M3 28h25" stroke-width="3"/><path d="M3 22c1-6 4-7 9-7M8 12l5 3-5 3M7 33h6M21 31v4"/><text class="ic-a" x="22" y="22">A</text></svg></button>
      <button aria-label="旋转符号"><svg class="k" viewBox="0 0 32 44"><text class="ic-a" x="19" y="22">A</text><path d="M0 25h31M5 25l9 9 9-9"/></svg></button>
      <button aria-label="中心孔"><svg class="k" viewBox="0 0 32 44"><circle cx="7" cy="14" r="4"/><circle cx="24" cy="14" r="4"/><circle cx="7" cy="31" r="4"/><circle cx="24" cy="31" r="4"/><path d="M0 14h13M18 14h13M0 31h13M18 31h13M7 7v14M24 7v14M7 24v14M24 24v14" stroke="#e22"/></svg></button>
      <button aria-label="圆心标记"><svg class="k" viewBox="0 0 32 44"><circle cx="15" cy="22" r="13" fill="#fff"/><path d="M15 22V9A13 13 0 0 0 2 22zM15 22v13a13 13 0 0 0 13-13z" fill="#00dfe8"/></svg></button>
      <button aria-label="弧长标注"><svg class="k" viewBox="0 0 32 44"><text class="ic-a sm" x="8" y="17">A</text><path d="M3 32C8 20 20 20 30 31"/><path d="M2 32l2-8 5 5z" fill="#222"/></svg></button>
      <button aria-label="锥度标注"><svg class="k" viewBox="0 0 32 44"><path d="M5 30L24 13v17z" fill="#f00" stroke="none"/><path d="M3 35h25V10" stroke="#000" stroke-width="3"/></svg></button>
    </div>
  </aside>
</main>

<div class="underdock"><i></i></div>

<footer class="status">
  <span class="prompt">定位点:</span>
  <span class="cmd">Paraload</span>
  <span class="coord">410.901, 288.375</span>
  <span class="snap">屏幕点</span>
  <button>正交</button><button class="on">线宽</button><button class="wide">动态输入</button><button>导航</button><button class="drop" aria-label="导航选项"></button>
</footer>

<div class="taskbar">
  <button class="start" aria-label="开始"><svg viewBox="0 0 48 48"><path d="M8 12l13-2v13H8zM23 10l17-2v15H23zM8 25h13v13L8 36zM23 25h17v15l-17-2z"/></svg></button>
  <button class="run" aria-label="文件资源管理器"><svg viewBox="0 0 48 48"><path d="M3 8q0-2 2-2h14l4 4v6H3z" fill="#e09f00"/><path d="M3 12h16l4-3h20q2 0 2 2v26q0 2-2 2H5q-2 0-2-2z" fill="url(#gFolder)"/><path d="M10 41V25q0-2 2-2h24q2 0 2 2v16h-7v-9H17v9z" fill="#3a96dd"/></svg></button>
  <button class="run" aria-label="浏览器"><svg viewBox="0 0 48 48"><circle cx="24" cy="24" r="24" fill="#0b7bd0"/><path d="M1 18C5 6 14 0 24 0c14 0 24 10 24 21 0 8-6 12-13 12-6 0-8-2-6-5 2-4 1-9-6-12-8-3-17-2-22 2z" fill="url(#gEdge)"/><path d="M20 20c-8 8-4 26 12 27 6-2 10-6 12-10-12 6-26-2-24-17z" fill="#134f9c"/><path d="M24 19c-6 8-1 18 10 19 4 0 8-1 10-3l4-8c-4 5-9 6-13 6-6 0-8-2-6-5 2-3 0-7-5-9z" fill="#d4e7f0"/></svg></button>
  <button aria-label="打印机"><svg viewBox="0 0 48 48"><path d="M13 8l20-2 4 26H15z" fill="#f4f4f4" stroke="#bbb"/><rect x="11" y="5" width="25" height="5" rx="2" fill="#fff" stroke="#aaa"/><path d="M17 14h13M17 18h8M18 23h14M18 27h14" stroke="#aaa"/><path d="M25 17h7v5h-7z" fill="#3b8fd0"/><path d="M2 26h9v12H2zM38 25h9v10h-9z" fill="#b89f80"/><path d="M6 36l14-6 20 4-6 9-24-1z" fill="#8f9696"/><circle cx="34" cy="38" r="5" fill="#4d5456"/><path d="M12 37h9l-2 4h-8z" fill="#e8e8dc"/></svg></button>
  <button class="run" aria-label="PDF"><svg viewBox="0 0 48 48"><path d="M0 0h36v11h12v37H0z" fill="#68217a"/><path d="M38 0l10 10H38z" fill="#68217a"/><path d="M5 4l20 12 20 28-24-12z" fill="#854a92"/><path d="M36 7c-3 2-5 1-9 1-9 0-16 7-16 15 0 7 6 12 12 10 6-1 9-5 10-10-4 3-8 2-8-1 0-4 5-3 8-5 2-3 2-6 3-10z" fill="#fff"/><circle cx="22" cy="22" r="6" fill="#68217a"/><text class="ic-pdf" x="24" y="45">PDF</text></svg></button>
  <button class="run active" aria-label="CAXA"><svg viewBox="0 0 44 48"><use href="#logo"/></svg></button>
  <button class="run" aria-label="微信"><svg viewBox="0 0 48 48"><path d="M17 4c10 0 17 7 17 15s-7 15-17 15l-5-1-6 3 1-6C3 27 0 23 0 19 0 11 7 4 17 4z" fill="url(#gChat)"/><path d="M33 18c8 0 14 6 14 12 0 4-2 7-4 9l1 5-5-2-6 1c-8 0-14-5-14-12s6-13 14-13z" fill="#ebebeb"/><g fill="#15803d"><circle cx="11" cy="14" r="3"/><circle cx="23" cy="14" r="3"/></g><g fill="#8a8a8a"><circle cx="28" cy="26" r="2"/><circle cx="38" cy="26" r="2"/></g></svg></button>
  <div class="tray">
    <button class="sogou" aria-label="输入法"><svg viewBox="0 0 32 32"><path d="M1 6L25 1q3 0 3 3l4 20q0 3-3 3L8 31q-3 0-3-3z" fill="#f4511e"/><path d="M25 9c-8-3-15-1-15 3s13 3 13 7-8 5-14 3" fill="none" stroke="#fff" stroke-width="5"/></svg></button>
    <button aria-label="显示隐藏的图标"><svg viewBox="0 0 32 32"><path d="M4 22L16 10l12 12" fill="none" stroke="#000" stroke-width="2"/></svg></button>
    <button aria-label="安全卫士"><svg viewBox="0 0 32 32"><circle cx="15" cy="16" r="13" fill="#ffe128"/><path d="M4 10A13 13 0 0 1 28 12M3 22a13 13 0 0 0 14 7" fill="none" stroke="#12a150" stroke-width="5"/><path d="M15 9v14M8 16h14" stroke="#12a150" stroke-width="4"/><path d="M21 20v-3c0-4 7-4 7 0v3" fill="none" stroke="#e9a84c" stroke-width="2"/><path d="M18 20h13v11H18z" fill="#f5b457"/></svg></button>
    <button aria-label="电源"><svg viewBox="0 0 32 32"><path d="M9 7h20v18H7M29 12h3v7h-3" fill="none" stroke="#000" stroke-width="2"/><path d="M12 10h14v12H10z"/><path d="M3 3v5M7 3v5M5 15v11" stroke="#000" stroke-width="2"/><path d="M1 8h8v5l-4 4-4-4z" fill="#d8dfec" stroke="#000" stroke-width="2"/></svg></button>
    <button aria-label="网络"><svg viewBox="0 0 32 32"><g fill="none" stroke="#000" stroke-width="2"><path d="M4 30A24 24 0 0 1 28 6M10 30a18 18 0 0 1 18-18M16 30a12 12 0 0 1 12-12"/></g><circle cx="25" cy="27" r="3"/></svg></button>
    <button aria-label="音量"><svg viewBox="0 0 32 32"><path d="M1 12h5l6-7v23l-6-7H1z" fill="none" stroke="#000" stroke-width="2"/><path d="M17 12q3 4 0 9" fill="none" stroke="#000" stroke-width="2"/><path d="M21 8q6 8 0 17M25 4q9 12 0 25" fill="none" stroke="#8e97a5" stroke-width="2"/></svg></button>
    <div class="clock"><time>16:39</time><time>2022/4/19</time></div>
    <button class="bell" aria-label="通知"><svg viewBox="0 0 34 34"><path d="M2 2h30v24h-11l-4 5-4-5H2z" fill="none" stroke="#000" stroke-width="2"/></svg></button>
    <i class="peek"></i>
  </div>
  <div class="stamp">咖迷社区 <span>｜</span> <b>CAXA</b>数码大方</div>
</div>
</body>
</html>
```
FILE: styles.css
```css
* { box-sizing: border-box; }
body {
  margin: 0;
  min-height: 100vh;
  display: flex;
  flex-direction: column;
  background: #e6e6e6;
  color: #444;
  font: 24px/32px "Open Sans", "Noto Sans CJK SC", sans-serif;
  overflow: hidden;
}
button, select {
  border: 0;
  margin: 0;
  padding: 0;
  background: none;
  color: inherit;
  font: inherit;
  appearance: none;
}
a { color: inherit; text-decoration: none; }
svg { display: block; }
.defs { position: absolute; width: 0; height: 0; }

/* title bar */
.titlebar {
  display: flex;
  align-items: flex-start;
  height: 35px;
  background: #2b579a;
  color: #fff;
}
.title-logo { width: 26px; height: 26px; margin-right: 6px; margin-left: -4px; }
.titlebar h1 {
  margin: 0 auto 0 4px;
  font-size: 23px;
  font-weight: 400;
  line-height: 26px;
  white-space: nowrap;
}
.winbtns { display: flex; }
.winbtns button { width: 72px; padding: 0 26px; height: 22px; }
.winbtns button:last-child { width: 60px; padding-right: 14px; }
.winbtns svg { width: 20px; height: 20px; }

/* menu */
.menubar { display: flex; align-items: center; gap: 29px; height: 46px; }
.menu-logo { width: 32px; height: 32px; margin-right: -10px; }
.menubar > button { line-height: 46px; white-space: nowrap; }
.mdibtns { display: flex; gap: 15px; margin-left: auto; }
.mdibtns svg { width: 20px; height: 20px; }

/* tool bar */
.toolrow { display: flex; height: 50px; }
.toolbar {
  display: flex;
  align-items: center;
  height: 48px;
  padding-right: 1px;
  background: #efefef;
  border-radius: 0 4px 4px 0;
}
.toolbar > button { width: 46px; flex: none; display: grid; place-items: center; }
.toolbar > button.mid { width: 50px; }
.toolbar > button.undo { margin-left: 4px; }
.toolbar svg { width: 32px; height: 32px; }
.sep { width: 16px; height: 42px; flex: none; background: linear-gradient(#d0d0d0, #d0d0d0) center / 1px 100% no-repeat; }
.drop::after {
  content: "";
  display: block;
  border: 5px solid transparent;
  border-top: 6px solid #666;
  border-bottom: 0;
}
.toolbar > button.drop { width: 22px; }
.drop.dim::after { border-top-color: #bbb; }
.grip-v { width: 14px; height: 32px; background: repeating-linear-gradient(#aaa 0 2px, transparent 2px 4px) 6px 0 / 2px 100% no-repeat; }
.combo {
  position: relative;
  display: flex;
  align-items: center;
  height: 36px;
  background: #fff;
  border: 1px solid #c0c0c0;
}
.combo::after {
  content: "";
  position: absolute;
  right: 10px;
  top: 14px;
  border: 5px solid transparent;
  border-top: 6px solid #666;
  border-bottom: 0;
  pointer-events: none;
}
.combo select { flex: 1; min-width: 0; height: 34px; outline: 0; font-size: 22px; }
.combo.layer { width: 296px; padding-left: 2px; }
.combo.layer select { font-size: 24px; padding-left: 4px; }
.combo.color { width: 176px; padding-left: 13px; }
.combo.line { width: 216px; padding-left: 7px; }
.combo.color select { padding-left: 14px; }
.combo.line select { padding-left: 4px; }
.combo.line .thick + select { padding-left: 20px; }
.swatch { width: 24px; height: 24px; border: 2px solid #222; background: #fff; }
.sample { width: 72px; height: 1px; background: #e00; }
.sample.thick { width: 59px; height: 4px; margin-left: 5px; background: #444; }

/* work area */
.work { flex: 1; min-height: 0; display: grid; grid-template-columns: 144px 1fr 40px; }
.dock-left { display: flex; align-items: flex-start; }
.palette {
  display: flex;
  flex-direction: column;
  margin-top: 46px;
  background: #efefef;
  border-radius: 4px;
}
.palette button { height: 44px; flex: none; overflow: hidden; }
.palette svg { width: 32px; height: 44px; }
.grip-h { height: 9px; background: repeating-linear-gradient(90deg, #aaa 0 2px, transparent 2px 4px) 0 3px / 100% 2px no-repeat; }
.rule { height: 1px; margin: 8px 0; background: #d0d0d0; }
.p1 { width: 40px; }
.p1 .grip-h { margin-right: 10px; }
.p2 { width: 50px; padding: 0 8px 3px 10px; }
.p3 { width: 40px; padding: 3px 0 2px 9px; }
.splitter { width: 6px; height: 82px; margin-top: 5px; background: #d4d4d4; }
.library { display: flex; flex-direction: column; align-items: center; gap: 6px; padding: 6px 0 0 11px; font-size: 22px; line-height: 24px; }
.library svg { width: 32px; height: 32px; }
.library span { writing-mode: vertical-rl; text-orientation: sideways; }

.k { fill: none; stroke: #3b444f; stroke-width: 1; }
.k .h { fill: #fff; stroke: #222; }
.k use { stroke: none; }
.k text { stroke: none; fill: #3b444f; text-anchor: middle; font-family: "Liberation Sans", sans-serif; }
.k .ic-a { font-size: 18px; font-weight: 700; }
.k .ic-a.sm { font-size: 14px; }
.k .ic-a.big { font-size: 38px; font-weight: 400; }
.k .ic-n { font-size: 14px; font-weight: 700; }
.k .ic-t text { font-size: 9px; font-weight: 700; fill: #0066cc; }
.ic-code { font: 9px "Liberation Sans", sans-serif; }
.ic-help { font: 700 26px "Liberation Sans", sans-serif; text-anchor: middle; }
.ic-pdf { font: 700 10px "Liberation Sans", sans-serif; text-anchor: middle; fill: #fff; }

/* document tabs */
.center { display: flex; flex-direction: column; min-width: 0; }
.doctabs { display: flex; height: 36px; font-size: 23px; line-height: 34px; border-bottom: 1px solid #b0b0b0; }
.tab {
  position: relative;
  display: flex;
  justify-content: space-between;
  align-items: center;
  width: 238px;
  padding: 0 8px 0 41px;
  background: #efefef;
  border-top: 1px solid #aaa;
  border-right: 1px solid #aaa;
  border-radius: 0 4px 0 0;
  white-space: nowrap;
}
.tab svg { width: 20px; height: 20px; stroke: #777; stroke-width: 3; }
.tab:nth-child(1) { width: 437px; padding-left: 75px; clip-path: polygon(37px 0, 100% 0, 100% 100%, 2px 100%); }
.tab.first { font-size: 22px; }
.tab:nth-child(4) { width: 265px; }
.tab:nth-child(5) { width: 368px; padding-left: 46px; font-size: 22px; }
.tab:nth-child(6) { width: 252px; }
.tab:nth-child(7) { width: 297px; }
.tab.active {
  width: 276px;
  margin-left: -28px;
  padding-left: 66px;
  background: #fff;
  color: #333;
  font-weight: 700;
  font-size: 24px;
  clip-path: polygon(35px 0, 100% 0, 100% 100%, 0 100%);
}
.newtab { width: 47px; padding: 7px 13px; background: #efefef; border: 1px solid #aaa; border-width: 1px 1px 0 0; border-radius: 4px 4px 0 0; }
.newtab svg { width: 20px; height: 20px; }
.tablist { margin-left: auto; width: 28px; }
.tablist::after { content: ""; display: block; margin-left: 3px; border: 9px solid transparent; border-top: 10px solid #666; border-bottom: 0; }

/* drawing */
.canvas { flex: 1; min-height: 0; background: #000; overflow: hidden; }
.sheet { width: 100%; height: 100%; shape-rendering: crispEdges; fill: none; }
.thin { stroke: #fff; stroke-width: 1; }
.bold { stroke: #fff; stroke-width: 2; }
.mag { stroke: #f0f; stroke-width: 1; }
.axis { stroke: #c0c; stroke-width: 1; }
.note path { stroke: #0f0; }
.note text { fill: #0f0; font: 500 10px "Noto Sans CJK SC", sans-serif; text-anchor: middle; }
.note text.sm { font-size: 8px; }
.spec {
  width: 473px;
  table-layout: fixed;
  border-collapse: collapse;
  color: #0f0;
  font: 500 9px/9px "Noto Sans CJK SC", sans-serif;
  text-align: center;
  white-space: nowrap;
}
.spec tr { height: 18px; }
.spec tr:nth-child(3n+4) { height: 19px; }
.spec tr.rules { height: 55px; }
.spec td, .spec th { padding: 0; border: 1px solid #0f0; font-weight: 500; }
.spec td.l { padding-left: 6px; text-align: left; }
.spec td.n { font-size: 8px; }
.spec [rowspan="4"] { line-height: 19px; }
.spec p { margin: 0; line-height: 18px; }
.w3 { width: 3px; } .w8 { width: 8px; } .w13 { width: 13px; } .w21 { width: 21px; } .w23 { width: 23px; }
.w31 { width: 31px; } .w32 { width: 32px; } .w39 { width: 39px; } .w40 { width: 40px; }
.w45 { width: 45px; } .w52 { width: 52px; } .w78 { width: 78px; }
.box { display: block; height: 10px; margin: 0 auto; border: 1px solid #0f0; }
.b3 { width: 3px; } .b5 { width: 5px; } .b8 { width: 8px; } .b10 { width: 10px; } .b14 { width: 14px; } .b16 { width: 16px; }
.b26 { width: 26px; } .b28 { width: 28px; } .b34 { width: 34px; } .b36 { width: 36px; } .b38 { width: 38px; } .b60 { width: 60px; }

.sheettabs { display: flex; align-items: center; height: 36px; padding-left: 2px; gap: 10px; }
.sheettabs svg { width: 16px; height: 16px; }
.model {
  width: 94px;
  margin-left: -8px;
  line-height: 36px;
  text-align: center;
  color: #333;
  background: #fff;
  clip-path: polygon(0 0, 100% 0, 76px 100%, 19px 100%);
}

.underdock { height: 48px; display: flex; }
.underdock i { width: 47px; background: #efefef; }

/* status bar */
.status {
  display: flex;
  height: 35px;
  border-top: 1px solid #c8c8c8;
  background: #f0f0f0;
  line-height: 44px;
  overflow: hidden;
  white-space: nowrap;
  padding-right: 26px;
}
.cmd { margin-left: auto; width: 176px; font-size: 22px; }
.coord { width: 354px; font-size: 22px; }
.snap { width: 167px; }
.status button { width: 66px; height: 44px; line-height: 44px; }
.status button.on { background: #aaa; }
.status button.wide { width: 114px; }
.status button.drop { width: 18px; padding-left: 2px; }

/* task bar */
.taskbar {
  position: relative;
  display: flex;
  height: 80px;
  background: linear-gradient(90deg, #d3e8f0 0, #d3e6ef 60%, #d7deec 85%, #d9deec 100%);
  color: #000;
}
.taskbar > button { width: 98px; display: grid; place-items: center; background: linear-gradient(#0078d7, #0078d7) center bottom / 0 4px no-repeat; }
.taskbar > button.start { width: 101px; padding-right: 5px; }
.taskbar > button.run { background-size: 80px 4px; }
.taskbar > button.active { background-size: 98px 4px; background-color: #eef6fa; }
.taskbar > button svg { width: 48px; height: 48px; }
.tray { display: flex; align-items: center; margin-left: auto; }
.tray button { width: 64px; display: grid; place-items: center; }
.tray svg { width: 32px; height: 32px; }
.tray .sogou { align-self: flex-start; padding-top: 3px; }
.clock { display: flex; flex-direction: column; width: 146px; text-align: center; font-size: 23px; line-height: 37px; padding-bottom: 2px; }
.tray .bell { width: 80px; }
.bell svg { width: 34px; height: 34px; }
.peek { width: 9px; margin-left: 17px; height: 80px; border-left: 2px solid #b0b7c4; }
.stamp {
  position: absolute;
  right: 3px;
  bottom: 4px;
  color: #fc0;
  font: 300 19px/20px "Noto Sans CJK SC", sans-serif;
  white-space: nowrap;
}
.stamp span { padding: 0 3px; opacity: .6; }
.stamp b { font: 16px "Liberation Mono", monospace; }
```
